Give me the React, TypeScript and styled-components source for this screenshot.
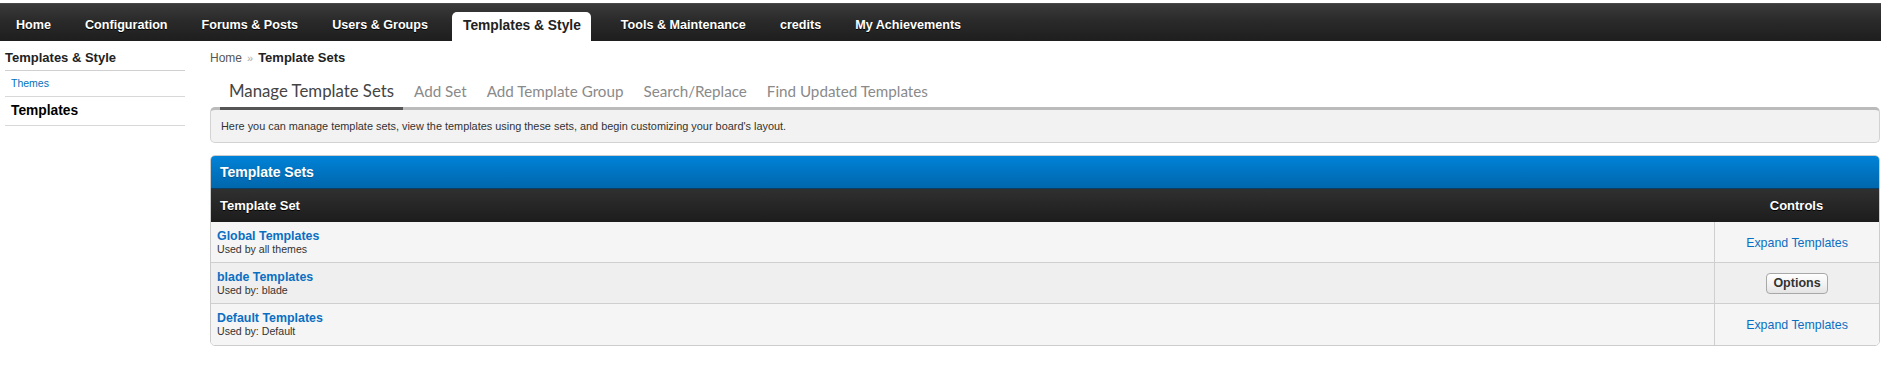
import React from "react";
import styled, { createGlobalStyle } from "styled-components";

const GlobalStyle = createGlobalStyle`
  html, body { margin: 0; padding: 0; background: #fff; }
  body { font-family: "Liberation Sans", Arial, sans-serif; color: #333; }
  * { box-sizing: border-box; }
`;

const Page = styled.div`
  width: 1881px;
`;

const TopStrip = styled.div`
  height: 3px;
  background: #fff;
`;

const Nav = styled.nav`
  height: 38px;
  background: linear-gradient(to bottom, #3a3a3a 0%, #2a2a2a 45%, #1e1e1e 100%);
  border-top: 1px solid #4a4a4a;
  display: flex;
  align-items: flex-end;
  padding-left: 6px;
`;

const NavItem = styled.a<{ $active?: boolean }>`
  display: block;
  height: 29px;
  padding: ${(p) => (p.$active ? "5px 10px 0 11px" : "5px 10px 0")};
  margin-right: ${(p) => (p.$active ? "20px" : "14px")};
  font-size: ${(p) => (p.$active ? "13.8px" : "12.6px")};
  line-height: 17px;
  font-weight: bold;
  color: ${(p) => (p.$active ? "#222" : "#fff")};
  background: ${(p) => (p.$active ? "#fff" : "transparent")};
  border-radius: 5px 5px 0 0;
  text-decoration: none;
  white-space: nowrap;
  text-shadow: ${(p) => (p.$active ? "none" : "0 1px 0 #000")};
`;

const Layout = styled.div`
  display: grid;
  grid-template-columns: 210px 1fr;
  padding-right: 1px;
`;

const Sidebar = styled.aside`
  margin-left: 5px;
  width: 180px;
  padding-top: 9px;
`;

const SideHeading = styled.div`
  font-size: 13px;
  line-height: 16px;
  font-weight: bold;
  color: #222;
  padding-bottom: 4px;
  border-bottom: 1px solid #d0d0d0;
`;

const SideItem = styled.a<{ $active?: boolean }>`
  display: block;
  padding: ${(p) => (p.$active ? "5px 6px" : "6px 6px")};
  font-size: ${(p) => (p.$active ? "13.8px" : "10.5px")};
  line-height: ${(p) => (p.$active ? "18px" : "13px")};
  font-weight: ${(p) => (p.$active ? "bold" : "normal")};
  color: ${(p) => (p.$active ? "#000" : "#0072bc")};
  border-bottom: 1px solid #d8d8d8;
  text-decoration: none;
`;

const Main = styled.main`
  padding-top: 9px;
`;

const Breadcrumb = styled.div`
  font-size: 12px;
  line-height: 16px;
  color: #555;
  display: flex;
  align-items: center;
  gap: 5px;
`;

const Crumb = styled.span`
  color: #555;
`;

const Sep = styled.span`
  color: #aaa;
  font-size: 11px;
`;

const CrumbCurrent = styled.span`
  font-size: 13px;
  font-weight: bold;
  color: #222;
`;

const Tabs = styled.div`
  display: flex;
  align-items: flex-end;
  margin: 15px 0 -3px 10px;
  position: relative;
  z-index: 1;
`;

const Tab = styled.a<{ $active?: boolean }>`
  display: block;
  padding: 0 9px 6px;
  margin-right: 2px;
  font-family: Lato, "Open Sans", sans-serif;
  font-size: ${(p) => (p.$active ? "16.8px" : "15.2px")};
  line-height: 20px;
  color: ${(p) => (p.$active ? "#444" : "#8a8a8a")};
  border-bottom: 3px solid ${(p) => (p.$active ? "#555" : "transparent")};
  text-decoration: none;
  white-space: nowrap;
`;

const Intro = styled.div`
  background: #f2f2f2;
  border: 1px solid #d2d2d2;
  border-top: 3px solid #bbb;
  border-radius: 5px;
  padding: 9px 9px 9px 10px;
  font-size: 10.9px;
  line-height: 14px;
  color: #333;
`;

const Panel = styled.div`
  margin-top: 12px;
  border: 1px solid #ccc;
  border-radius: 5px;
  overflow: hidden;
`;

const PanelTitle = styled.div`
  height: 33px;
  padding: 0 9px;
  display: flex;
  align-items: center;
  background: linear-gradient(to bottom, #0083d8 0%, #0074c2 50%, #0067ac 100%);
  border-bottom: 1px solid #0a3f63;
  color: #fff;
  font-size: 14px;
  font-weight: bold;
  text-shadow: 0 1px 0 rgba(0, 0, 0, 0.25);
`;

const Table = styled.div`
  display: grid;
  grid-template-columns: 1fr 165px;
`;

const HeadCell = styled.div<{ $center?: boolean }>`
  height: 33px;
  display: flex;
  align-items: center;
  justify-content: ${(p) => (p.$center ? "center" : "flex-start")};
  padding: 0 9px;
  background: linear-gradient(to bottom, #303030 0%, #262626 50%, #1c1c1c 100%);
  color: #fff;
  font-size: 13px;
  font-weight: bold;
  text-shadow: 0 1px 0 #000;
`;

const Cell = styled.div<{ $alt?: boolean; $last?: boolean; $controls?: boolean }>`
  height: 41px;
  background: ${(p) => (p.$alt ? "#efefef" : "#f5f5f5")};
  border-bottom: ${(p) => (p.$last ? "none" : "1px solid #cfcfcf")};
  border-left: ${(p) => (p.$controls ? "1px solid #cfcfcf" : "none")};
  display: flex;
  flex-direction: column;
  justify-content: ${(p) => (p.$controls ? "center" : "flex-start")};
  align-items: ${(p) => (p.$controls ? "center" : "flex-start")};
  padding: ${(p) => (p.$controls ? "0" : "7px 6px 0")};
`;

const SetName = styled.a`
  font-size: 12.4px;
  line-height: 14px;
  font-weight: bold;
  color: #0a6fc2;
  text-decoration: none;
`;

const SetUse = styled.div`
  font-size: 10.6px;
  line-height: 13px;
  color: #333;
`;

const ControlLink = styled.a`
  font-size: 12.4px;
  line-height: 14px;
  color: #0a6fc2;
  text-decoration: none;
  margin-top: 1px;
`;

const OptionsButton = styled.button`
  height: 21px;
  width: 62px;
  padding: 0;
  border: 1px solid #a8a8a8;
  border-radius: 4px;
  background: linear-gradient(to bottom, #ffffff 0%, #f0f0f0 60%, #e4e4e4 100%);
  font-family: "Liberation Sans", Arial, sans-serif;
  font-size: 12.5px;
  font-weight: bold;
  color: #333;
  cursor: pointer;
`;

const navItems = [
  "Home",
  "Configuration",
  "Forums & Posts",
  "Users & Groups",
  "Templates & Style",
  "Tools & Maintenance",
  "credits",
  "My Achievements",
];

const tabs = [
  "Manage Template Sets",
  "Add Set",
  "Add Template Group",
  "Search/Replace",
  "Find Updated Templates",
];

const sets = [
  { name: "Global Templates", used: "Used by all themes", control: "expand" },
  { name: "blade Templates", used: "Used by: blade", control: "options" },
  { name: "Default Templates", used: "Used by: Default", control: "expand" },
];

export default function App() {
  return (
    <Page>
      <GlobalStyle />
      <TopStrip />
      <Nav>
        {navItems.map((item) => (
          <NavItem key={item} href="#" $active={item === "Templates & Style"}>
            {item}
          </NavItem>
        ))}
      </Nav>
      <Layout>
        <Sidebar>
          <SideHeading>Templates &amp; Style</SideHeading>
          <SideItem href="#">Themes</SideItem>
          <SideItem href="#" $active>
            Templates
          </SideItem>
        </Sidebar>
        <Main>
          <Breadcrumb>
            <Crumb>Home</Crumb>
            <Sep>»</Sep>
            <CrumbCurrent>Template Sets</CrumbCurrent>
          </Breadcrumb>
          <Tabs>
            {tabs.map((t, i) => (
              <Tab key={t} href="#" $active={i === 0}>
                {t}
              </Tab>
            ))}
          </Tabs>
          <Intro>
            Here you can manage template sets, view the templates using these sets, and begin customizing your board's layout.
          </Intro>
          <Panel>
            <PanelTitle>Template Sets</PanelTitle>
            <Table>
              <HeadCell>Template Set</HeadCell>
              <HeadCell $center>Controls</HeadCell>
              {sets.map((s, i) => {
                const alt = i % 2 === 1;
                const last = i === sets.length - 1;
                return (
                  <React.Fragment key={s.name}>
                    <Cell $alt={alt} $last={last}>
                      <SetName href="#">{s.name}</SetName>
                      <SetUse>{s.used}</SetUse>
                    </Cell>
                    <Cell $alt={alt} $last={last} $controls>
                      {s.control === "options" ? (
                        <OptionsButton>Options</OptionsButton>
                      ) : (
                        <ControlLink href="#">Expand Templates</ControlLink>
                      )}
                    </Cell>
                  </React.Fragment>
                );
              })}
            </Table>
          </Panel>
        </Main>
      </Layout>
    </Page>
  );
}
